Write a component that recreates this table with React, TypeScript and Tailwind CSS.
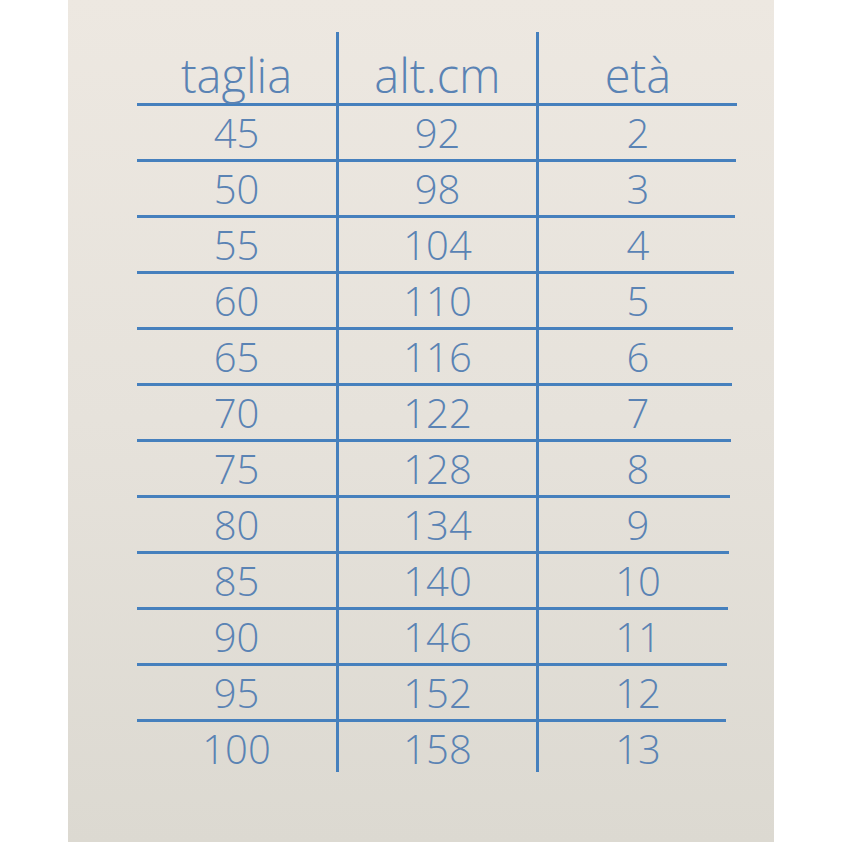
const rows: [string, string, string][] = [
  ['45', '92', '2'],
  ['50', '98', '3'],
  ['55', '104', '4'],
  ['60', '110', '5'],
  ['65', '116', '6'],
  ['70', '122', '7'],
  ['75', '128', '8'],
  ['80', '134', '9'],
  ['85', '140', '10'],
  ['90', '146', '11'],
  ['95', '152', '12'],
  ['100', '158', '13'],
];

function Row({ cells, header, last }: { cells: [string, string, string]; header?: boolean; last?: boolean }) {
  const height = header ? 'text-[47px] h-[71px]' : last ? 'text-[40px] h-[50px]' : 'text-[40px] h-[53px]';
  const align = header ? 'items-end pb-[4px]' : last ? 'items-start pt-[7px]' : 'items-center';
  return (
    <div className={`grid grid-cols-[199px_203px_198px] ${height}`}>
      <div className={`flex justify-center leading-none ${align}`}>{cells[0]}</div>
      <div className={`flex justify-center leading-none border-x-[3px] border-[#4680bd] ${align}`}>{cells[1]}</div>
      <div className={`flex justify-center leading-none ${align}`}>{cells[2]}</div>
    </div>
  );
}

export default function App() {
  return (
    <div className="w-[842px] h-[842px] bg-white flex">
      <div className="ml-[68px] w-[706px] h-full bg-gradient-to-b from-[#ede8e1] via-[#e6e2db] to-[#dcd9d1] pt-[32px] pl-[69px]">
        <div
          className="w-[600px] text-[#5a83b4] font-light"
          style={{ fontFamily: '"Open Sans", sans-serif' }}
        >
          <Row cells={['taglia', 'alt.cm', 'età']} header />
          {rows.map((r, i) => (
            <div key={r[0]}>
              <div className="h-[3px] bg-[#4680bd]" style={{ width: 600 - i }} />
              <Row cells={r} last={i === rows.length - 1} />
            </div>
          ))}
        </div>
      </div>
    </div>
  );
}
